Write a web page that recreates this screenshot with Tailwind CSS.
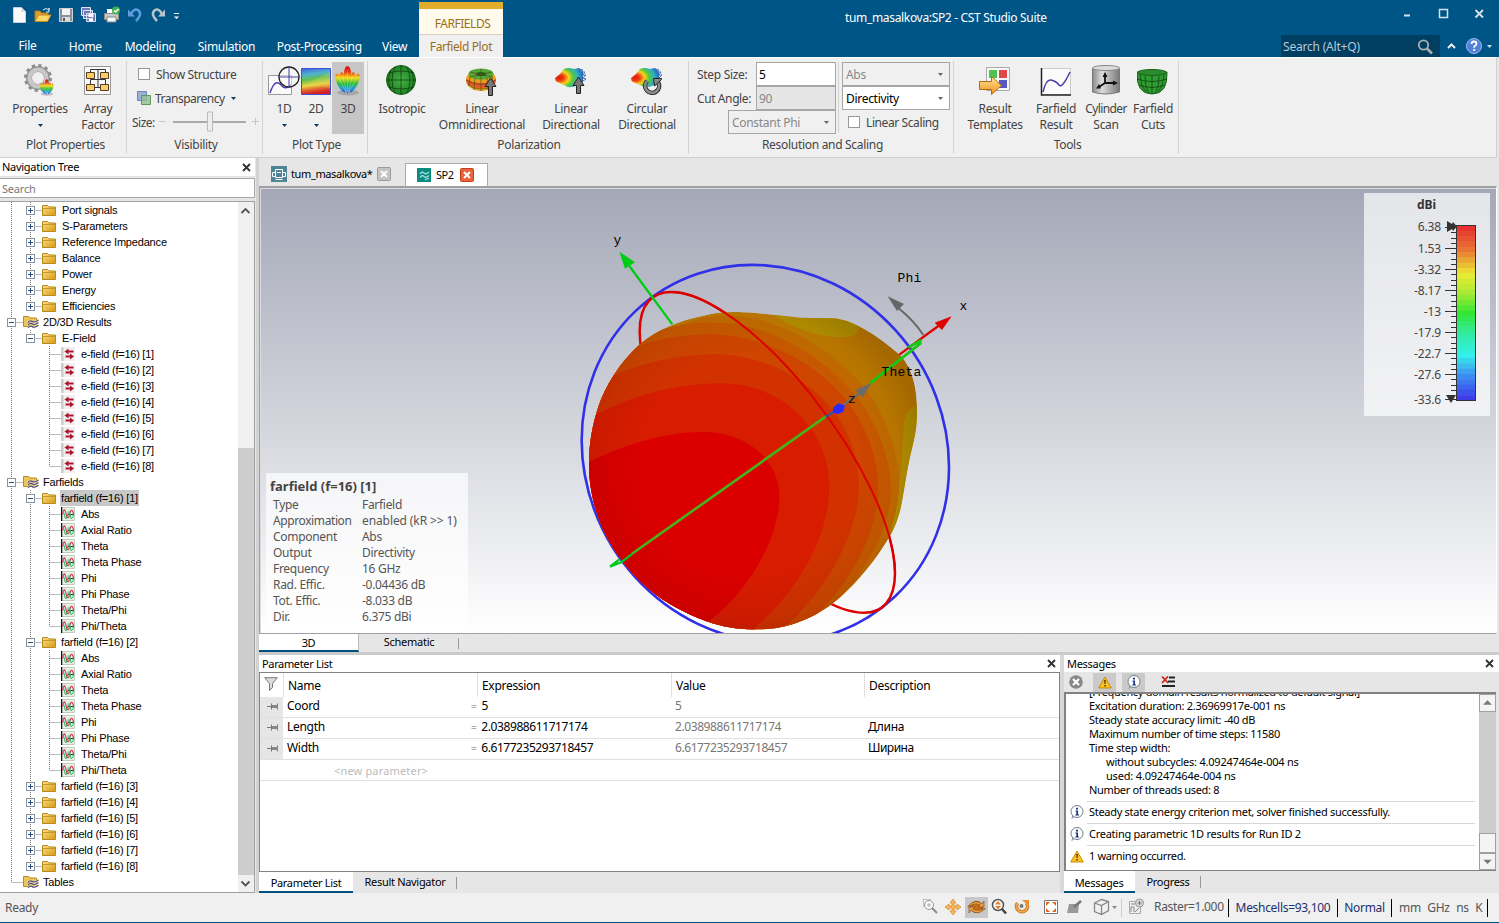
<!DOCTYPE html>
<html lang="en">
<head>
<meta charset="utf-8">
<title>tum_masalkova:SP2 - CST Studio Suite</title>
<script src="https://cdn.jsdelivr.net/npm/@tailwindcss/browser@4"></script>
</head>
<body class="w-[1499px] h-[923px] overflow-hidden bg-[#e6e6e6] font-['Noto_Sans',sans-serif] text-[12px] leading-4 tracking-[-0.3px] text-[#444] whitespace-nowrap flex flex-col">

<svg class="absolute w-0 h-0">
  <defs>
    <linearGradient id="rainbow" gradientUnits="userSpaceOnUse" x1="0" y1="2" x2="0" y2="30"><stop offset="0" stop-color="#d81010"/><stop offset=".2" stop-color="#e83010"/><stop offset=".42" stop-color="#f4dc20"/><stop offset=".62" stop-color="#30c030"/><stop offset=".8" stop-color="#20a0d0"/><stop offset="1" stop-color="#3040d0"/></linearGradient>
    <linearGradient id="rainbow2" x1="0" y1="0" x2=".15" y2="1"><stop offset="0" stop-color="#4060e0"/><stop offset=".25" stop-color="#50b0d0"/><stop offset=".45" stop-color="#60c050"/><stop offset=".68" stop-color="#e8d040"/><stop offset=".88" stop-color="#e05030"/><stop offset="1" stop-color="#d02020"/></linearGradient>
    <linearGradient id="fold" x1="0" y1="0" x2="1" y2="1"><stop offset="0" stop-color="#fbe08a"/><stop offset="1" stop-color="#d89a10"/></linearGradient>
    <linearGradient id="metal" x1="0" y1="0" x2="1" y2="0"><stop offset="0" stop-color="#8a8a8a"/><stop offset=".35" stop-color="#ddd"/><stop offset="1" stop-color="#777"/></linearGradient>
    <linearGradient id="orange" x1="0" y1="0" x2="0" y2="1"><stop offset="0" stop-color="#ffe6a0"/><stop offset="1" stop-color="#f09018"/></linearGradient>
    <radialGradient id="green"><stop offset="0" stop-color="#48b048"/><stop offset="1" stop-color="#1f8022"/></radialGradient>
    <radialGradient id="fish" cx=".15" cy=".5" r=".85"><stop offset="0" stop-color="#e01808"/><stop offset=".2" stop-color="#f04010"/><stop offset=".4" stop-color="#f8d020"/><stop offset=".6" stop-color="#50c840"/><stop offset=".8" stop-color="#30b0c0"/><stop offset="1" stop-color="#2868c0"/></radialGradient>
    <symbol id="folder" viewBox="0 0 14 12"><path d="M.5 11.500V1.500h5l1.500 1.500h6.500v8.500z" fill="url(#fold)" stroke="#b98a1c"/><path d="M1 4.500h12" stroke="#c79a2c"/></symbol>
    <symbol id="folderw" viewBox="0 0 16 14"><path d="M.5 11.500V1.500h5l1.500 1.500h6.500v8.500z" fill="#f0c458" stroke="#b98a1c"/><path d="M5 7.500q2.500-2.500 4.500-1t6-1.500M5 10q2.500-2.500 4.500-1t6-1.500M5 12.700q2.500-2.500 4.500-1t6-1.500" fill="none" stroke="#f4e4c0" stroke-width="1.800"/><path d="M5 7.500q2.500-2.500 4.500-1t6-1.500M5 10q2.500-2.500 4.500-1t6-1.500M5 12.700q2.500-2.500 4.500-1t6-1.500" fill="none" stroke="#4a4a80" stroke-width="1.100"/></symbol>
    <symbol id="efield" viewBox="0 0 14 14"><path d="M0 0h14v14H0z" fill="#f0f0f0"/><path d="M0 0h2.500v14H0z" fill="#ccc"/><path d="M3.500 4.500l4-3v2h5v2h-5v2zM13 9.500l-4-3v2H4.500v2H9v2z" fill="#b0142a"/></symbol>
    <symbol id="wave" viewBox="0 0 14 14"><path d="M.5.5h13v13H.5z" fill="#e8f0e8" stroke="#c0ccc0"/><path d="M.5 0v14" stroke="#111" stroke-width="1.500"/><path d="M7 7.500h6" stroke="#333"/><path d="M1.500 7.500C2.500 1.500 4 1.500 5 6.500s2.500 6 3.500 1 3-6 4-.5" fill="none" stroke="#d03040" stroke-width="1.100"/><path d="M1.500 3.500c1.500 0 2 8 3.500 8s1.700-7 3-7 1 7 2.500 7 1.500-2 2-4" fill="none" stroke="#38b868" stroke-width="1.100"/></symbol>
    <symbol id="crystal" viewBox="0 0 32 32"><ellipse cx="16" cy="28.500" rx="11" ry="3" fill="#777" opacity=".4"/><g fill="url(#rainbow)"><path d="M13 29Q6 25 3.500 15q-1-4 .5-5 2-1 3.500 2L14 22z"/><path d="M18 29q7-4 9.500-14 1-4-.5-5-2-1-3.500 2L17 22z"/><path d="M12 28Q7 14 8 10q1-3 3-1 3 4 4 14z"/><path d="M19 28q5-14 4-18-1-3-3-1-3 4-4 14z"/><path d="M15.500 30Q11 20 12 8q1-6 3.500-6T19 8q1 12-3.500 22z"/></g><path d="M15.500 6v22M6 13l8 15M25 13l-8 15M10.500 12l4 15M20.500 12l-4 15" stroke="#fff" stroke-opacity=".25" fill="none"/></symbol>
    <symbol id="info" viewBox="0 0 14 14"><path d="M2 13.500l1-4h3z" fill="#fff" stroke="#8a95a5"/><circle cx="7" cy="6.500" r="6" fill="#fff" stroke="#6e7c90"/><path d="M6 2.800h2v1.700H6zM5.500 5.500H8v4h1v1H5.300v-1h1v-3h-.8z" fill="#1c2f7c"/></symbol>
    <symbol id="warn" viewBox="0 0 14 13"><path d="M7 1L13.300 12H.7z" fill="#fcc21e" stroke="#c98a10" stroke-linejoin="round"/><path d="M6.200 4h1.600l-.3 4h-1zM6.300 9h1.400v1.500H6.300z" fill="#4a3000"/></symbol>
    <symbol id="pin" viewBox="0 0 12 8"><path d="M0 4.500h4" stroke="#777"/><path d="M4.500 1.500v6M10.500 1.500v6" stroke="#777"/><path d="M5 3h6v3H5z" fill="#888"/></symbol>
    <symbol id="close" viewBox="0 0 9 9"><path d="M1 1l7 7M8 1L1 8" stroke="#333" stroke-width="1.900"/></symbol>
    <symbol id="caret" viewBox="0 0 5 3"><path d="M0 0h5L2.500 3z" fill="currentColor"/></symbol>
  </defs>
</svg>

<!-- Title bar and ribbon tabs -->
<header class="h-[57px] shrink-0 bg-[#005587] flex text-white">
  <div class="w-[419px] flex flex-col">
    <div class="h-[34px] flex items-start pt-[6px] pl-[11px] gap-[5px]">
      <svg class="w-[18px] h-[18px]" viewBox="0 0 18 18"><path d="M2.500 1.500h8l4 4v11h-12z" fill="#fafafa" stroke="#c8d0d8"/><path d="M10.500 1.500v4h4z" fill="#ccc"/></svg>
      <svg class="w-[18px] h-[18px]" viewBox="0 0 18 18"><path d="M1 15V5h5l1.500 2H14v2" fill="#e0a030" stroke="#b07818"/><path d="M1 15.500L4.500 9H17l-3.500 6.500z" fill="#ffd668" stroke="#c08820"/><path d="M9 4q3-3 6 0V2v4h-3" fill="none" stroke="#d8e8f8"/></svg>
      <svg class="w-[18px] h-[18px]" viewBox="0 0 18 18"><path d="M2.500 2.500h13v13h-13z" fill="#8a8f98" stroke="#d0d0d0"/><path d="M5 3h8v6H5z" fill="#f4f4f4"/><path d="M5 11h8v4H5z" fill="#ddd"/><path d="M6 12h2v3H6z" fill="#555"/></svg>
      <svg class="w-[18px] h-[18px]" viewBox="0 0 18 18"><g fill="#7078b8" stroke="#dfe2f5"><path d="M1.500 1.500h9v8h-9zM3.500 4.500h9v8h-9zM6.500 7.500h9v8h-9z"/></g><path d="M8.500 8h5v3h-5zM9 13h4v2H9z" fill="#fff"/></svg>
      <svg class="w-[18px] h-[18px]" viewBox="0 0 18 18"><path d="M4 3h9v5H4z" fill="#fff"/><path d="M1.500 7.500h14v6h-14z" fill="#c8c8c8" stroke="#8a8a8a"/><path d="M4 11h9v5H4z" fill="#f8f8f8" stroke="#888"/><circle cx="13" cy="4.500" r="4" fill="#40b050"/><path d="M11 4.500l1.500 1.500L15.500 3" fill="none" stroke="#fff" stroke-width="1.500"/></svg>
      <svg class="w-[18px] h-[18px]" viewBox="0 0 18 18"><path d="M5 8q3-6 7-4 5 4-2 11" fill="none" stroke="#5f9de0" stroke-width="2.500"/><path d="M2 3.500v7h7z" fill="#5f9de0"/></svg>
      <svg class="w-[18px] h-[18px]" viewBox="0 0 18 18"><path d="M13 8q-3-6-7-4-5 4 2 11" fill="none" stroke="#b8c4cc" stroke-width="2.500"/><path d="M16 3.500v7H9z" fill="#b8c4cc"/></svg>
      <svg class="w-[7px] h-[7px] mt-[7px] ml-px" viewBox="0 0 7 7"><path d="M1 .5h5" stroke="#fff"/><path d="M1 3.500h5L3.500 6z" fill="#fff"/></svg>
    </div>
    <nav class="flex-1 flex items-center pt-[2px] [&>a]:text-center">
      <a class="w-[55px] -mt-[2px]">File</a><a class="w-[61px]">Home</a><a class="w-[69px]">Modeling</a><a class="w-[84px]">Simulation</a><a class="w-[102px]">Post-Processing</a><a class="w-[49px]">View</a>
    </nav>
  </div>
  <div class="w-[84px] mt-[2px] border-t-[7px] border-[#e2ac2c] bg-[#fffaeb] flex flex-col text-center text-[#9a6f1c]">
    <span class="h-[25px] pt-[7px] pl-[3px] tracking-[-0.45px]">FARFIELDS</span>
    <span class="flex-1 bg-[#f0f0f0] border-t border-[#d6cfc0] pt-[4px] tracking-[-0.4px]">Farfield Plot</span>
  </div>
  <div class="flex-1 flex flex-col">
    <div class="h-[35px] flex">
      <span class="w-[886px] pl-[342px] pt-[10px] tracking-[-0.33px]">tum_masalkova:SP2 - CST Studio Suite</span>
      <svg class="w-[110px] h-[30px]" viewBox="1389 0 110 30" fill="none" stroke="#d3e2ec"><path d="M1404 15.500h6" stroke-width="2"/><path d="M1439.500 9.500h8v8h-8z" stroke-width="1.500"/><path d="M1475.500 10l7.500 7.500M1483 10l-7.500 7.500" stroke-width="1.800"/></svg>
    </div>
    <div class="h-[22px] flex pl-[778px]">
      <div class="w-[159px] bg-[#003e62] text-[#b5cad8] flex items-center justify-between pl-[2px] pr-[7px] pt-[2px] tracking-[-0.2px]">Search (Alt+Q)
        <svg class="w-[16px] h-[16px]" viewBox="0 0 16 16" fill="none" stroke="#a9b0b5"><circle cx="6.500" cy="6" r="4.700" stroke-width="1.800"/><path d="M10 9.500l5 5" stroke-width="2.500"/></svg></div>
      <svg class="w-[56px] h-[22px]" viewBox="1440 35 56 22"><path d="M1448 48l3.500-3.500 3.500 3.500" fill="none" stroke="#eee" stroke-width="2"/><circle cx="1474" cy="46" r="7.500" fill="#5080d8" stroke="#9db8ec"/><path d="M1471.500 44q0-2.500 2.500-2.500t2.500 2.300q0 1.200-2.300 2.800v1.200M1474.200 49v2" fill="none" stroke="#fff" stroke-width="1.800"/><path d="M1487 45h5l-2.500 3z" fill="#cfe0ea"/></svg>
    </div>
  </div>
</header>

<!-- Ribbon -->
<section class="h-[101px] shrink-0 bg-[#f0f0f0] border-t border-t-white border-b border-b-[#d0d0d0] flex mr-[2px] border-r border-r-[#d0d0d0]">
  <div class="w-[127px] flex flex-col my-[3px] border-r border-[#d4d4d4]">
    <div class="h-[75px] flex pl-[10px] gap-[4px] pt-[3px] text-center">
      <div class="w-[60px] flex flex-col items-center"><svg class="w-8 h-8 mb-[5px]" viewBox="0 0 32 32"><circle cx="14" cy="14" r="9" fill="none" stroke="#9a9a9a" stroke-width="6"/><circle cx="14" cy="14" r="12.500" fill="none" stroke="#8c8c8c" stroke-width="3" stroke-dasharray="3.270 3.270"/><circle cx="14" cy="14" r="8.500" fill="none" stroke="#c8c8c8" stroke-width="4"/><use href="#crystal" x="14" y="14" width="18" height="18"/></svg>Properties<svg class="w-[5px] h-[3px] mt-[7px] text-[#113a5c]"><use href="#caret"/></svg></div>
      <div class="w-[48px] flex flex-col items-center"><svg class="w-8 h-8 mb-[5px]" viewBox="0 0 32 32"><path d="M2.500 2.500h26v28h-26z" fill="#f8f8f4" stroke="#999"/><path d="M8.500 9V5.500h15V9M8.500 20v-4.500h15V20M16 5v18M12 23.500h8" fill="none" stroke="#334"/><path d="M4.500 8.500h8v6h-8zM18.500 8.500h8v6h-8zM4.500 20.500h8v6h-8zM18.500 20.500h8v6h-8z" fill="#f7cf68" stroke="#5a3a20"/></svg>Array<br>Factor</div>
    </div>
    <p class="text-center mt-px pl-[5px]">Plot Properties</p>
  </div>
  <div class="w-[136px] flex flex-col my-[3px] border-r border-[#d4d4d4]">
    <div class="h-[75px] flex flex-col pt-px pl-[5px] [&>div]:h-6 [&>div]:flex [&>div]:items-center">
      <div><i class="ml-[6px] mr-[6px] w-[12px] h-[12px] bg-white border border-[#999]"></i><span class="pt-[2px] tracking-[-0.4px]">Show Structure</span></div>
      <div><svg class="ml-[5px] mr-[4px] w-[14px] h-[14px]" viewBox="0 0 14 14"><path d="M.5.5h9v9h-9z" fill="#9ab0d8" stroke="#6a88b8"/><path d="M4.500 4.500h9v9h-9z" fill="#90c090" fill-opacity=".8" stroke="#5a9a60"/></svg><span class="pt-[2px] tracking-[-0.5px]">Transparency</span><svg class="w-[5px] h-[3px] ml-[6px] text-[#113a5c]"><use href="#caret"/></svg></div>
      <div><span class="pt-[2px] tracking-[-0.5px] w-[26px]">Size:</span><svg class="w-[102px] h-[22px]" viewBox="158 111 102 22" fill="none"><path d="M159 121.500h6M252 121.500h7M255.500 118v7" stroke="#c4c4c4"/><path d="M173 122h73" stroke="#aaa" stroke-width="2"/><path d="M207.500 112h5v19h-5z" fill="#eee" stroke="#bbb"/></svg></div>
    </div>
    <p class="text-center mt-px pl-[3px]">Visibility</p>
  </div>
  <div class="w-[105px] flex flex-col my-[3px] border-r border-[#d4d4d4]">
    <div class="h-[75px] flex pl-[5px] pt-px text-center [&>div]:w-8 [&>div]:h-[72px] [&>div]:pt-[2px] [&>div]:flex [&>div]:flex-col [&>div]:items-center">
      <div><svg class="w-8 h-8 mb-[5px]" viewBox="0 0 32 32"><path d="M.5 11.500h23v19H.5z" fill="#fafafa" stroke="#999"/><path d="M2 29q3-9 6-10t6 3 9-1" fill="none" stroke="#5040b0" stroke-width="1.400"/><circle cx="21" cy="13" r="10" fill="#fff" fill-opacity=".5" stroke="#222" stroke-width="1.300"/><path d="M10 13h22M21 2v22" stroke="#4040a0"/></svg>1D<svg class="w-[5px] h-[3px] mt-[7px] text-[#113a5c]"><use href="#caret"/></svg></div>
      <div><svg class="w-8 h-8 mb-[5px]" viewBox="0 0 32 32"><path d="M1.500 4.500h29v26h-29z" fill="url(#rainbow2)" stroke="#4050d0"/><path d="M2 22L30 8v16q-14-4-28 0z" fill="#f0e060" opacity=".25"/></svg>2D<svg class="w-[5px] h-[3px] mt-[7px] text-[#113a5c]"><use href="#caret"/></svg></div>
      <div class="bg-[#c6c6c6]"><svg class="w-8 h-8 mb-[5px]"><use href="#crystal"/></svg>3D</div>
    </div>
    <p class="text-center mt-px pl-[3px]">Plot Type</p>
  </div>
  <div class="w-[321px] flex flex-col my-[3px] border-r border-[#d4d4d4]">
    <div class="h-[75px] flex pl-[8px] pt-[3px] text-center [&>div]:flex [&>div]:flex-col [&>div]:items-center">
      <div class="w-[52px]"><svg class="w-8 h-8 mb-[5px]" viewBox="0 0 32 32"><circle cx="15" cy="16" r="14.500" fill="url(#green)" stroke="#186018"/><path d="M1 16h29M3 9q12-4 25 0M3 23q12 4 25 0M15 1v30M9 3q-6 13 0 26M21 3q6 13 0 26M5 6q-5 10 0 20M25 6q5 10 0 20" fill="none" stroke="#0c440e" stroke-width=".8"/></svg>Isotropic</div>
      <div class="w-[94px] ml-[7px] mr-[7px]"><svg class="w-8 h-8 mb-[5px]" viewBox="0 0 32 32"><ellipse cx="15" cy="16" rx="15" ry="11" fill="#e8a01c"/><path d="M0 15q15 8 30 0l-1 5q-14 8-28 0z" fill="#e85828"/><ellipse cx="15" cy="10" rx="12.500" ry="5.500" fill="#50a838"/><ellipse cx="15" cy="10" rx="5" ry="2" fill="#1c6020"/><path d="M0 16q15 9 30 0M2 21q13 8 26 0M9 14l-1 12M15 15v12M21 14l1 12M4 12l-1 9M26 12l1 9M4 8l22 5M26 8L4 13M15 5v10" fill="none" stroke="#5a4a10" stroke-width=".7"/><path d="M22.500 31.500v-9h-3.500l5.500-8.500 5.500 8.500h-3.500v9z" fill="#777" stroke="#222"/></svg>Linear<br>Omnidirectional</div>
      <div class="w-[70px]"><svg class="w-8 h-8 mb-[5px]" viewBox="0 0 32 32"><path d="M0 14q5-3 9-9 4-2 10 0l5-1 4 4v10l-5 3q-8 4-12 1Q7 20 2 18 0 17 0 14z" fill="url(#fish)"/><path d="M24 5l4 1-2 2 4 0-2 3 3 0-3 3 3 1-3 2" fill="none" stroke="#4878a8"/><path d="M21.500 29.500v-8H18l5.500-8.500 5.500 8.500h-3.500v8z" fill="#777" stroke="#222"/></svg>Linear<br>Directional</div>
      <div class="w-[70px] ml-[6px]"><svg class="w-8 h-8 mb-[5px]" viewBox="0 0 32 32"><path d="M0 14q5-3 9-9 4-2 10 0l5-1 4 4v10l-5 3q-8 4-12 1Q7 20 2 18 0 17 0 14z" fill="url(#fish)"/><path d="M24 5l4 1-2 2 4 0-2 3 3 0-3 3" fill="none" stroke="#4878a8"/><path d="M16 17a7 7 0 1 0 11 1" fill="none" stroke="#222" stroke-width="4.500"/><path d="M16 17a7 7 0 1 0 11 1" fill="none" stroke="#8a8a8a" stroke-width="2.700"/><path d="M22.500 14.500h8v1l-7 6.500z" fill="#888" stroke="#222"/></svg>Circular<br>Directional</div>
    </div>
    <p class="text-center mt-px pl-[2px]">Polarization</p>
  </div>
  <div class="w-[265px] flex flex-col my-[3px] border-r border-[#d4d4d4]">
    <div class="h-[75px] flex pt-px">
      <div class="w-[150px] pr-[2px] h-[71px] border-r border-[#d4d4d4] [&>div]:h-6 [&>div]:flex [&>div]:items-center [&>div]:pl-[8px]">
        <div><span class="pt-[2px]">Step Size:</span><span class="ml-auto w-[80px] h-6 border border-[#a6a6a6] bg-white text-black pl-[2px] pt-[4px]">5</span></div>
        <div><span class="pt-[2px] tracking-[-0.4px]">Cut Angle:</span><span class="ml-auto w-[80px] h-6 border border-[#a6a6a6] bg-[#e5e5e5] text-[#888] pl-[2px] pt-[4px]">90</span></div>
        <div><span class="ml-auto w-[108px] h-6 border border-[#a6a6a6] text-[#888] pl-[3px] pr-[6px] flex items-center justify-between"><b class="font-normal pt-[2px]">Constant Phi</b><svg class="w-[5px] h-[3px] text-[#666]"><use href="#caret"/></svg></span></div>
      </div>
      <div class="pl-[3px] [&>div]:h-6 [&>div]:w-[108px] [&>div]:flex [&>div]:items-center">
        <div class="border border-[#a6a6a6] text-[#888] pl-[3px] pr-[6px] justify-between"><span class="pt-[2px]">Abs</span><svg class="w-[5px] h-[3px] text-[#666]"><use href="#caret"/></svg></div>
        <div class="border border-[#a6a6a6] bg-white text-black pl-[3px] pr-[6px] justify-between"><span class="pt-[2px]">Directivity</span><svg class="w-[5px] h-[3px] text-[#666]"><use href="#caret"/></svg></div>
        <div><i class="ml-[6px] mr-[6px] w-[12px] h-[12px] bg-white border border-[#999]"></i><span class="pt-[2px] tracking-[-0.4px]">Linear Scaling</span></div>
      </div>
    </div>
    <p class="text-center mt-px pl-[3px]">Resolution and Scaling</p>
  </div>
  <div class="w-[225px] flex flex-col my-[3px] border-r border-[#d4d4d4]">
    <div class="h-[75px] flex pl-[8px] pt-[3px] text-center [&>div]:flex [&>div]:flex-col [&>div]:items-center">
      <div class="w-[66px]"><svg class="w-8 h-8 mb-[5px]" viewBox="0 0 32 32"><path d="M7.500 3.500h23v23h-23z" fill="#f8f8f8" stroke="#aaa"/><path d="M10 6h8v8h-8z" fill="#50c050"/><path d="M20 6h8v8h-8z" fill="#e04848"/><path d="M20 16h8v8h-8z" fill="#5858c0"/><path d="M.5 17.500h12v-5l10 9-10 9v-5H.5z" fill="url(#orange)" stroke="#b06a18"/></svg>Result<br>Templates</div>
      <div class="w-[46px] ml-[5px]"><svg class="w-8 h-8 mb-[5px]" viewBox="0 0 32 32"><path d="M1.500 4.500h29v26h-29z" fill="#fbfbfb" stroke="#ccc"/><path d="M1.500 4v27H31" fill="none" stroke="#222" stroke-width="1.500"/><path d="M3 28q3-13 8-12t8 5 11-13" fill="none" stroke="#4a3ca8" stroke-width="1.500"/></svg>Farfield<br>Result</div>
      <div class="w-[50px] ml-[2px]"><svg class="w-8 h-8 mb-[5px]" viewBox="0 0 32 32"><path d="M2.500 4v24q13 4 27 0V4z" fill="url(#metal)" stroke="#777"/><ellipse cx="16" cy="4" rx="13.500" ry="2.500" fill="#ddd" stroke="#888"/><path d="M15 11v8h11M15 19l-6 4" fill="none" stroke="#111" stroke-width="1.800"/><path d="M12.500 13l2.500-5 2.500 5zM23 16.500l5 2.500-5 2.500zM9 20l2 4.500H6z" fill="#111"/></svg><span class="tracking-[-0.6px]">Cylinder</span>Scan</div>
      <div class="w-[46px] -ml-px"><svg class="w-8 h-8 mb-[5px]" viewBox="0 0 32 32"><path d="M0 8q-1 22 15 22T30 8z" fill="#2f9c32" stroke="#186018"/><ellipse cx="15" cy="8.500" rx="14.500" ry="3" fill="#2a8a2c" stroke="#186018"/><path d="M0 15q15 5 30 0M2 21q13 5 26 0M15 12v18M8 12q0 12 4 17M22 12q0 12-4 17M3 11q1 11 6 17M27 11q-1 11-6 17" fill="none" stroke="#0c440e" stroke-width=".8"/></svg>Farfield<br>Cuts</div>
    </div>
    <p class="text-center mt-px pl-[3px]">Tools</p>
  </div>
</section>

<main class="h-[735px] shrink-0 flex">
  <!-- Navigation tree -->
  <aside class="w-[259px] shrink-0 border-r-[3px] border-[#d2d2d2] flex flex-col pr-px">
    <div class="h-[18px] bg-white text-black flex items-center justify-between pl-[2px] pr-[4px] text-[11px] tracking-[-0.28px]">Navigation Tree<svg class="w-[9px] h-[9px]"><use href="#close"/></svg></div>
    <div class="h-[20px] mt-[2px] border border-l-0 border-[#a8a8a8] bg-white text-[#777] pl-[2px] pt-[2px] text-[11px] tracking-[-0.2px]">Search</div>
    <div class="h-[692px] mt-[3px] bg-white border border-l-0 border-[#a0a0a0] flex overflow-hidden">
      <div id="tree" class="w-[238px] font-['Liberation_Sans',sans-serif] text-[11px] tracking-[-0.18px] text-black"></div>
      <div class="flex-1 bg-[#f0f0f0] flex flex-col items-center">
        <svg class="w-[16px] h-[17px]" viewBox="0 0 16 17"><path d="M3.500 11L7.500 7l4 4" fill="none" stroke="#555" stroke-width="1.800"/></svg>
        <div class="w-full mt-[229px] h-[427px] bg-[#cdcdcd]"></div>
        <svg class="w-[16px] h-[17px]" viewBox="0 0 16 17"><path d="M3.500 6.500l4 4 4-4" fill="none" stroke="#555" stroke-width="1.800"/></svg>
      </div>
    </div>
  </aside>

  <div class="flex-1 flex flex-col">
    <!-- Document tabs -->
    <div class="h-[28px] flex text-[11px] text-black">
      <div class="w-[146px] pl-[12px] pt-[4px] flex items-center tracking-[-0.38px]"><svg class="w-4 h-4 mr-[4px]" viewBox="0 0 16 16"><path d="M0 0h16v16H0z" fill="#4f8496"/><path d="M4.500 3.500h7v8h-7zM1.500 6.500h3v4h-3zM11.500 6.500h3v4h-3zM4.500 13.500h7M6 6.500h4" fill="none" stroke="#fff"/></svg><span class="w-[81px] -mt-px">tum_masalkova*</span><svg class="w-[14px] h-[14px] ml-[5px]" viewBox="0 0 14 14"><rect x=".5" y=".5" width="13" height="13" rx="1" fill="#c4c4c4" stroke="#9a9a9a"/><path d="M4 4l6 6M10 4l-6 6" stroke="#fff" stroke-width="2"/></svg></div>
      <div class="w-[83px] mt-[5px] bg-white border border-b-0 border-[#aaa] flex items-center pl-[11px] pb-px tracking-[-0.5px]"><svg class="w-[14px] h-[14px] mr-[5px]" viewBox="0 0 14 14"><path d="M0 0h14v14H0z" fill="#0b8a80"/><path d="M3 6q2-3 4-1t5-1M3 9.500q2-3 4-1t5-1M8 12q2-2 4-1" fill="none" stroke="#9fe0d8" stroke-width="1.300"/></svg><span>SP2</span><svg class="w-[14px] h-[14px] ml-[6px]" viewBox="0 0 14 14"><rect x=".5" y=".5" width="13" height="13" rx="1" fill="#e8633c" stroke="#c04020"/><path d="M4 4l6 6M10 4l-6 6" stroke="#fff" stroke-width="2"/></svg></div>
    </div>
    <!-- 3D view -->
    <div class="relative h-[448px] mr-[2px] border-t-2 border-l border-b border-r border-[#a0a0a4] border-r-white bg-linear-to-b from-[#a4a8b7] to-white pl-px shadow-[inset_1px_1px_0_#dcdce0]">
      <svg id="view" class="block w-[1235px] h-[445px]" viewBox="261 188 1235 445">
        <defs>
          <path id="lobe" d="M87 730C87 670 97 615 115 560C135 500 180 425 240 372C290 330 360 300 430 287C460 279 490 276 520 276C580 275 640 286 720 293C760 294 790 293 820 295C870 298 940 335 1020 405C1055 440 1070 500 1071 560C1072 610 1068 640 1055 690C1040 750 1035 800 1025 850C1018 890 1000 940 970 980C930 1040 880 1100 820 1150C760 1195 680 1228 600 1228C540 1230 490 1222 440 1204C365 1177 295 1138 237 1081C185 1028 143 966 120 906C97 845 87 790 87 730Z"/>
          <clipPath id="lobeclip"><use href="#lobe"/></clipPath>
          <radialGradient id="shade" gradientUnits="userSpaceOnUse" cx="560" cy="740" r="540"><stop offset=".6" stop-color="#000" stop-opacity="0"/><stop offset=".85" stop-color="#000" stop-opacity=".06"/><stop offset="1" stop-color="#000" stop-opacity=".16"/></radialGradient>
        </defs>
        <g transform="translate(560 220) scale(.333333)" fill="none">
          <circle r="1" transform="matrix(551 40 0 565 616 701)" stroke="#3030e8" stroke-width="2.600" vector-effect="non-scaling-stroke"/>
          <circle r="1" transform="matrix(383 363 0 316 622 697)" stroke="#dc0000" stroke-width="2.500" vector-effect="non-scaling-stroke"/>
          <path d="M1015 406L1135 318" stroke="#e00000" stroke-width="7"/>
          <g clip-path="url(#lobeclip)" stroke="none">
            <use href="#lobe" fill="#c27c00"/>
            <path d="M620 270L650 290C700 325 780 352 850 352Q897 350 897 318L840 270ZM1080 555Q1040 560 1032 610C1024 690 1034 760 990 950L1100 900Z" fill="#b89200"/>
            <path d="M330 330C400 290 480 284 530 288C680 300 830 400 920 510C1000 620 1030 760 1012 850C1000 940 940 1050 860 1120L600 1300L60 1300V500Z" fill="#c66c00"/>
            <path d="M300 330C380 308 440 306 500 310C650 322 800 420 890 530C960 620 1000 740 992 830C985 940 900 1090 800 1165L600 1300H60V450Z" fill="#ca5a00"/>
            <path d="M180 400C280 355 370 342 460 343C640 350 800 450 880 570C940 660 962 760 953 840C940 960 860 1110 750 1200L600 1300H60V450Z" fill="#cf4600"/>
            <path d="M120 485C240 425 370 402 480 403C640 410 780 500 845 610C890 690 905 770 893 850C870 980 790 1120 670 1225L600 1300H60V500Z" fill="#d23200"/>
            <path d="M60 610C200 530 330 492 480 490C680 490 808 640 808 800C808 960 700 1130 570 1235L400 1300H60Z" fill="#d81c00"/>
            <path d="M60 738C180 680 300 636 430 636C560 636 658 720 658 830C658 960 560 1120 445 1205L400 1300H60Z" fill="#da0000"/>
            <use href="#lobe" fill="url(#shade)"/>
          </g>
          <path d="M-.755 -.656A1 1 0 0 1 1 0" transform="matrix(383 363 0 316 622 697)" stroke="#dc0000" stroke-width="2" vector-effect="non-scaling-stroke"/>
          <path d="M150 1040L178 1018M150 1040L185 1026L215 1003" stroke="#00c81e" stroke-width="7" fill="none"/>
          <path d="M215 1002L797 590" stroke="#46b418" stroke-width="8"/>
          <path d="M930 490L1084 368M1045 382L1085 360" stroke="#14c814" stroke-width="8"/>
          <path d="M797 590L836 566" stroke="#4050a0" stroke-width="7"/>
          <path d="M848 556L900 518" stroke="#6c6c6c" stroke-width="7"/>
          <path d="M935 488L887 510L908 532Z" fill="#6c6c6c"/>
          <path d="M820 562L836 550L855 557L850 575L832 583L818 576Z" fill="#2a2aff"/>
          <path d="M1175 289L1124 308L1146 330Z" fill="#e00000"/>
          <path d="M1090 345Q1062 302 1015 264" stroke="#666" stroke-width="6"/>
          <path d="M983 229L1032 252L1011 273Z" fill="#666"/>
          <path d="M337 313L208 138" stroke="#00cc14" stroke-width="7"/>
          <path d="M178 95L225 127L195 146Z" fill="#00cc14"/>
        </g>
        <g class="font-['Liberation_Mono',monospace] text-[13px] tracking-[0.2px]" fill="#000">
          <text x="613.500" y="244">y</text><text x="897.500" y="282">Phi</text><text x="959.500" y="310">x</text><text x="881.500" y="376">Theta</text><text x="848" y="403">z</text>
        </g>
        <rect x="1364" y="193" width="126" height="223" fill="#fff" fill-opacity=".7"/>
        <text x="1417" y="209" class="text-[12px] font-bold tracking-[0px]" fill="#333">dBi</text>
        <g id="scale"></g>
      </svg>
      <div class="absolute left-[6px] top-[285px] w-[202px] h-[160px] bg-white/70 pl-[4px] pt-[5px]">
        <h2 class="text-[13px] font-bold leading-4 text-[#444] tracking-[0px]">farfield (f=16) [1]</h2>
        <div class="grid grid-cols-[89px_auto] mt-[3px] pl-[3px] text-[#555]">
          <span>Type</span><span>Farfield</span><span class="tracking-[-0.4px]">Approximation</span><span class="tracking-[-0.1px]">enabled (kR &gt;&gt; 1)</span><span>Component</span><span>Abs</span><span>Output</span><span>Directivity</span><span>Frequency</span><span>16 GHz</span><span>Rad. Effic.</span><span>-0.04436 dB</span><span>Tot. Effic.</span><span>-8.033 dB</span><span>Dir.</span><span>6.375 dBi</span>
        </div>
      </div>
    </div>
    <div class="h-[18px] flex text-[11px] text-black">
      <span class="w-[100px] bg-white border-b-2 border-b-[#00507e] border-r border-r-[#bbb] text-center pt-px">3D</span><span class="w-[99px] text-center pl-px tracking-[-0.25px]">Schematic</span><i class="w-px h-[11px] mt-[4px] bg-[#999]"></i>
    </div>
    <div class="h-[3px] bg-[#cbcbcb]"></div>

    <div class="flex h-[238px]">
      <!-- Parameter list -->
      <div class="w-[801px] flex flex-col text-black">
        <div class="h-[17px] bg-white flex items-center justify-between pl-[3px] pr-[4px] text-[11px] tracking-[-0.35px]">Parameter List<svg class="w-[9px] h-[9px]"><use href="#close"/></svg></div>
        <div class="h-[200px] border border-[#828282] bg-white [&>div]:grid [&>div]:grid-cols-[23px_194px_194px_193px_auto]">
          <div class="h-[24px] [&>span]:border-l [&>span]:border-[#e0e0e0] [&>span]:pl-[4px] [&>span]:pt-[5px]">
            <svg class="w-[14px] h-[15px] ml-[4px] mt-[4px]" viewBox="0 0 14 15"><path d="M.7.700h12.600L8.500 6.500v4l-3 3v-7z" fill="#ddd" stroke="#777"/></svg>
            <span>Name</span><span>Expression</span><span>Value</span><span>Description</span></div>
          <div class="h-[21px] border-b border-[#e0e0e0] items-center"><i class="h-full bg-[#e6e6e6] flex items-center pl-[7px] pb-[2px]"><svg class="w-[12px] h-[8px]"><use href="#pin"/></svg></i><span class="pl-[4px] pb-[3px]">Coord</span><span class="pb-[3px]"><b class="font-normal text-[#aaa] text-[10px] -ml-[6px] mr-[5px]">=</b>5</span><span class="pl-[4px] pb-[3px] text-[#777]">5</span><span></span></div>
          <div class="h-[21px] border-b border-[#e0e0e0] items-center"><i class="h-full bg-[#e6e6e6] flex items-center pl-[7px] pb-[2px]"><svg class="w-[12px] h-[8px]"><use href="#pin"/></svg></i><span class="pl-[4px] pb-[3px]">Length</span><span class="pb-[3px] tracking-[-0.41px]"><b class="font-normal text-[#aaa] text-[10px] -ml-[6px] mr-[5px]">=</b>2.038988611717174</span><span class="pl-[4px] pb-[3px] text-[#777] tracking-[-0.41px]">2.038988611717174</span><span class="pl-[4px] pb-[3px]">Длина</span></div>
          <div class="h-[21px] border-b border-[#e0e0e0] items-center"><i class="h-full bg-[#e6e6e6] flex items-center pl-[7px] pb-[2px]"><svg class="w-[12px] h-[8px]"><use href="#pin"/></svg></i><span class="pl-[4px] pb-[3px]">Width</span><span class="pb-[3px] tracking-[-0.45px]"><b class="font-normal text-[#aaa] text-[10px] -ml-[6px] mr-[5px]">=</b>6.6177235293718457</span><span class="pl-[4px] pb-[3px] text-[#777] tracking-[-0.43px]">6.6177235293718457</span><span class="pl-[4px] pb-[3px] tracking-[-0.5px]">Ширина</span></div>
          <div class="h-[21px] border-b border-[#e0e0e0] items-center"><i></i><span class="pl-[51px] pt-px text-[#bbb] text-[11px] tracking-[0.17px]">&lt;new parameter&gt;</span></div>
        </div>
        <div class="h-[21px] flex text-[11px]"><span class="w-[94px] bg-white border-b-2 border-[#00507e] text-center pt-[3px] tracking-[-0.32px]">Parameter List</span><span class="w-[104px] text-center pt-[2px] tracking-[-0.3px]">Result Navigator</span><i class="w-px h-[12px] mt-[5px] -ml-px bg-[#999]"></i></div>
      </div>
      <!-- Messages -->
      <div class="w-[439px] border-l-4 border-[#d8d8d8] flex flex-col text-black text-[11px] tracking-[-0.29px]">
        <div class="h-[17px] bg-white flex items-center justify-between pl-[3px] pr-[5px]">Messages<svg class="w-[9px] h-[9px]"><use href="#close"/></svg></div>
        <div class="h-[20px] flex items-center">
          <svg class="w-[14px] h-[14px] ml-[5px]" viewBox="0 0 14 14"><circle cx="7" cy="7" r="6.800" fill="#888"/><path d="M4 4l6 6M10 4l-6 6" stroke="#fff" stroke-width="2.200"/></svg>
          <i class="w-[23px] h-[19px] ml-[10px] bg-[#cacaca] flex items-center justify-center"><svg class="w-[14px] h-[13px]"><use href="#warn"/></svg></i>
          <i class="w-[23px] h-[19px] ml-[6px] bg-[#cacaca] flex items-center justify-center"><svg class="w-[14px] h-[14px]"><use href="#info"/></svg></i>
          <svg class="w-[14px] h-[12px] ml-[16px]" viewBox="0 0 14 12"><path d="M8 1.500h6M7 5.500h7M1 10h13" stroke="#222" stroke-width="1.800"/><path d="M1 .5l6 6.500M7 .5L1 7" stroke="#c82828" stroke-width="1.800"/></svg>
        </div>
        <div class="h-[179px] border-2 border-[#828282] border-b border-r-0 bg-white flex mr-[3px] overflow-hidden">
          <div class="w-[409px] -mt-[9px] leading-[14px] pl-[2px]">
            <div class="pl-[21px] pb-[4px] tracking-[-0.26px]"><p class="tracking-[-0.32px]">[Frequency domain results normalized to default signal]</p><p>Excitation duration: 2.36969917e-001 ns</p><p>Steady state accuracy limit: -40 dB</p><p class="tracking-[-0.36px]">Maximum number of time steps: 11580</p><p>Time step width:</p><p class="pl-[17px] tracking-[-0.22px]">without subcycles: 4.09247464e-004 ns</p><p class="pl-[17px] tracking-[-0.18px]">used: 4.09247464e-004 ns</p><p class="tracking-[-0.34px]">Number of threads used: 8</p></div>
            <div class="flex h-[22px] items-center"><svg class="w-[14px] h-[14px] ml-[2px] mr-[3px]"><use href="#info"/></svg><span class="flex-1 border-t border-[#d8d8d8] h-full pt-[3px] pl-[2px]">Steady state energy criterion met, solver finished successfully.</span></div>
            <div class="flex h-[22px] items-center"><svg class="w-[14px] h-[14px] ml-[2px] mr-[3px]"><use href="#info"/></svg><span class="flex-1 border-t border-[#d8d8d8] h-full pt-[3px] pl-[2px] tracking-[-0.26px]">Creating parametric 1D results for Run ID 2</span></div>
            <div class="flex h-[22px] items-center"><svg class="w-[14px] h-[13px] ml-[2px] mr-[3px]"><use href="#warn"/></svg><span class="flex-1 border-t border-[#d8d8d8] h-full pt-[3px] pl-[2px] tracking-[-0.35px]">1 warning occurred.</span></div>
          </div>
          <div class="ml-auto w-[17px] bg-[#cdcdcd] flex flex-col [&>*]:border [&>*]:border-[#a0a0a0] [&>*]:bg-[#f4f4f4]">
            <svg class="w-[17px] h-[18px]" viewBox="0 0 17 18"><path d="M3.500 11l5-5 5 5z" fill="#777"/></svg>
            <i class="mt-auto h-[20px]"></i>
            <svg class="w-[17px] h-[17px]" viewBox="0 0 17 18"><path d="M3.500 7l5 5 5-5z" fill="#777"/></svg>
          </div>
        </div>
        <div class="h-[22px] flex tracking-[-0.3px]"><span class="w-[71px] bg-white border-b-2 border-[#00507e] text-center pr-px pt-[4px]">Messages</span><span class="w-[66px] text-center pt-[3px]">Progress</span><i class="w-px h-[12px] mt-[5px] -ml-px bg-[#999]"></i></div>
      </div>
    </div>
  </div>
</main>

<!-- Status bar -->
<footer class="h-[30px] shrink-0 bg-[#f0f0f0] border-b border-[#00507e] flex items-center text-[#555]">
  <span class="w-[920px] pl-[5px]">Ready</span>
  <svg class="w-[230px] h-[22px]" viewBox="920 897 230 22" fill="none">
    <circle cx="929" cy="905" r="4.500" stroke="#999" fill="#f8f8f8"/><path d="M923.500 899.500h8M923.500 899.500v8" stroke="#999" stroke-dasharray="1 1"/><path d="M927 905h4M929 903v4" stroke="#aaa"/><path d="M932 908l5 5" stroke="#888" stroke-width="2"/>
    <path d="M953 899l3 4h-2v3h3v-2l4 3-4 3v-2h-3v3h2l-3 4-3-4h2v-3h-3v2l-4-3 4-3v2h3v-3h-2z" fill="#f8b860" stroke="#d89030" stroke-width=".8"/>
    <rect x="965" y="897" width="23" height="21" fill="#c8c8c8"/><ellipse cx="976.500" cy="907" rx="6" ry="5.500" fill="#c87020" stroke="#7a4410"/><path d="M968 906q8-8 14-2l2-3v6h-6l2-2q-5-3-12 2zM985 909q-8 7-14 1l-2 3v-6h6l-2 2q5 3 12-1z" fill="#f0a040" stroke="#7a4410" stroke-width=".6"/>
    <circle cx="998" cy="905" r="5.500" stroke="#555" stroke-width="1.500" fill="#fff"/><path d="M995 904.500h6l-3-3.500zM995 906h6l-3 3.500z" fill="#e88020"/><path d="M1002 909l4 4.500" stroke="#444" stroke-width="2.500"/>
    <path d="M1017.500 903a5.500 5.500 0 1 0 9 0" stroke="#b87018" stroke-width="3.500"/><path d="M1017.500 903a5.500 5.500 0 1 0 9 0" stroke="#f0a848" stroke-width="2"/><path d="M1022 900h7v6z" fill="#e89030"/><circle cx="1021.500" cy="906" r="2" fill="#777"/>
    <path d="M1044.500 900.500h13v13h-13z" fill="#fff" stroke="#777"/><path d="M1046 902h4l-4 4zM1056 902h-4l4 4zM1046 912h4l-4-4zM1056 912h-4l4-4z" fill="#e06820"/>
    <path d="M1067 913l2-9h10l-1 9z" fill="#999"/><path d="M1074 907l7-6" stroke="#777" stroke-width="2.500"/>
    <path d="M1094.500 903l7-3.500 7 2v9l-7 4-7-3zM1094.500 903l7 2.500 7-4M1101.500 905.500v9" stroke="#888" stroke-width="1.300"/><path d="M1112 906h5l-2.500 3z" fill="#888"/>
    <path d="M1121.500 899v18" stroke="#ccc"/>
    <path d="M1129.500 901.500h11v12h-11z" stroke="#aaa" fill="#eee"/><path d="M1131 912v-5h3v5M1135 912l4-4M1131 904h4" stroke="#888"/><circle cx="1139.500" cy="903" r="4" fill="#d8d8d8" stroke="#999"/><path d="M1139.500 901v4M1137.500 903h4" stroke="#777"/>
  </svg>
  <span class="pl-[4px] w-[79px] h-[18px] border-r border-black tracking-[-0.32px]">Raster=1.000</span>
  <span class="w-[109px] h-[18px] border-r border-black text-center text-[#20306e] pt-px tracking-[-0.3px]">Meshcells=93,100</span>
  <span class="w-[54px] h-[18px] border-r border-black text-center text-[#20306e] pt-px">Normal</span>
  <span class="w-[96px] h-[18px] border-r border-black flex pl-[7px] pt-px gap-[6.500px]"><b class="font-normal">mm</b><b class="font-normal">GHz</b><b class="font-normal">ns</b><b class="font-normal">K</b></span>
</footer>

<script>
// Tree rows: l = level, t = label, x = expander sign, last = last child
const rows = [];
['Port signals','S-Parameters','Reference Impedance','Balance','Power','Energy','Efficiencies'].forEach((t,i)=>rows.push({l:1,t,icon:'folder',x:'+',last:i===6}));
rows.push({l:0,t:'2D/3D Results',icon:'folderw',x:'-'});
rows.push({l:1,t:'E-Field',icon:'folder',x:'-',last:true});
for(let i=1;i<9;i++) rows.push({l:2,t:`e-field (f=16) [${i}]`,icon:'efield',last:i===8,noB:true});
rows.push({l:0,t:'Farfields',icon:'folderw',x:'-'});
for(let n=1;n<9;n++){
  rows.push({l:1,t:`farfield (f=16) [${n}]`,icon:'folder',x:n<3?'-':'+',last:n===8,sel:n===1,ff:true});
  if(n<3) ['Abs','Axial Ratio','Theta','Theta Phase','Phi','Phi Phase','Theta/Phi','Phi/Theta'].forEach((t,i)=>rows.push({l:2,t,icon:'wave',last:i===7}));
}
rows.push({l:0,t:'Tables',icon:'folderw',last:true});
const xs=[11.5,30.5,49.5], ends=[23,42,61];
document.getElementById('tree').innerHTML = rows.map(r=>{
  let d='';
  for(let k=0;k<=r.l;k++){
    if(k===1&&r.noB) continue;
    d+=`M${xs[k]} 0V${k===r.l&&r.last?8:16}`;
  }
  d+=`M${xs[r.l]} 8.5H${ends[r.l]}`;
  const x=xs[r.l];
  const box=r.x?`<rect x="${x-4}" y="4.500" width="8" height="8" fill="#fff" stroke="#8a93a0"/><path d="M${x-2.5} 8.500h5${r.x==='+'?`M${x} 6v5`:''}" stroke="#2b4a8a"/>`:'';
  const w={0:'w-[23px]',1:'w-[42px]',2:'w-[61px]'}[r.l];
  const ic={folder:'w-[14px] h-[12px]',folderw:'w-[16px] h-[14px]',efield:'w-[14px] h-[14px]',wave:'w-[14px] h-[14px]'}[r.icon];
  const tx={0:'ml-[4px]',1:r.ff?'ml-[4px] px-px':'ml-[6px]',2:r.noB?'ml-[6px] tracking-[-0.25px]':'ml-[6px]'}[r.l];
  return `<div class="flex h-4 items-center"><svg class="h-4 shrink-0 ${w}" fill="none"><path d="${d}" stroke="#777" stroke-dasharray="1 1"/>${box}</svg><svg class="${ic}"><use href="#${r.icon}"/></svg><span class="${tx} ${r.sel?'bg-[#c8c8c8]':''}">${r.t}</span></div>`;
}).join('');

// Colour scale of the legend
const stops=[[0,230,50,50],[.14,232,125,50],[.27,235,235,50],[.38,170,235,50],[.5,50,230,50],[.62,50,235,160],[.75,50,240,235],[.86,60,150,240],[1,60,60,235]];
const N=33, top0=225.5, H=175;
let s='';
for(let i=0;i<N;i++){
  const p=i/(N-1); let k=0; while(k<stops.length-2&&p>stops[k+1][0])k++;
  const a=stops[k],b=stops[k+1],f=(p-a[0])/(b[0]-a[0]);
  const c=[1,2,3].map(j=>Math.round(a[j]+(b[j]-a[j])*f));
  s+=`<rect x="1456" y="${top0+i*H/N}" width="20" height="${H/N+.5}" fill="rgb(${c})"/>`;
}
s+=`<rect x="1456.500" y="225.500" width="19" height="175" fill="none" stroke="#333"/>`;
for(let i=0;i<32;i++){ const y=Math.round(227+i*5.25)+.5; s+=`<path d="M${i%4?1451:1445} ${y}H1456" stroke="#333"/>`; }
s+=`<path d="M1445 399.500h11" stroke="#333"/><path d="M1447 221l5 3 1-2 4 4.500-4 4.500-1-2-5 3z M1446 395h10l-5 8z" fill="#333"/>`;
['6.38','1.53','-3.32','-8.17','-13','-17.9','-22.7','-27.6','-33.6'].forEach((t,i)=>{ s+=`<text x="1441" y="${[231,253,274,295,316,337,358,379,404][i]}" text-anchor="end" class="text-[12px] tracking-[-0.15px]" fill="#444">${t}</text>`; });
document.getElementById('scale').innerHTML=s;
</script>
</body>
</html>
